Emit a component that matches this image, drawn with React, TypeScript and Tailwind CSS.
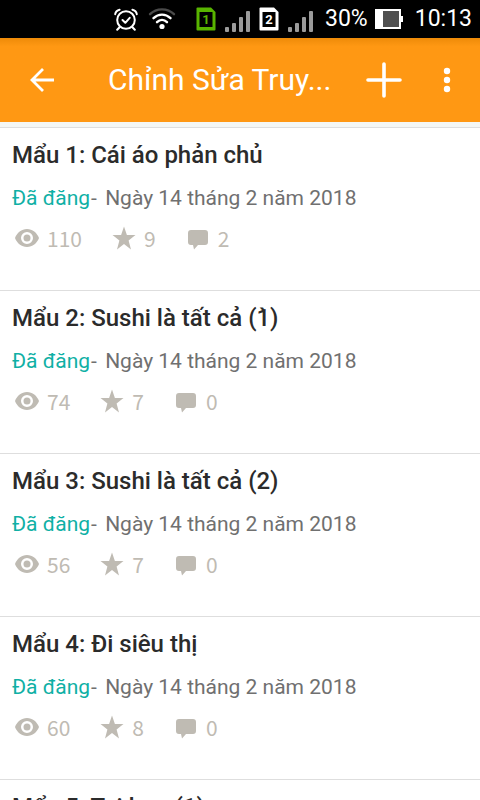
import React from 'react'

type Chapter = {
  title: string
  date: string
  views: number
  votes: number
  comments: number
}

const chapters: Chapter[] = [
  { title: 'Mẩu 1: Cái áo phản chủ', date: 'Ngày 14 tháng 2 năm 2018', views: 110, votes: 9, comments: 2 },
  { title: 'Mẩu 2: Sushi là tất cả (1\u0300)', date: 'Ngày 14 tháng 2 năm 2018', views: 74, votes: 7, comments: 0 },
  { title: 'Mẩu 3: Sushi là tất cả (2)', date: 'Ngày 14 tháng 2 năm 2018', views: 56, votes: 7, comments: 0 },
  { title: 'Mẩu 4: Đi siêu thị', date: 'Ngày 14 tháng 2 năm 2018', views: 60, votes: 8, comments: 0 },
  { title: 'Mẩu 5: Tai hoạ (1)', date: 'Ngày 14 tháng 2 năm 2018', views: 52, votes: 7, comments: 0 },
]

function AlarmIcon() {
  return (
    <svg className="h-6 w-6" viewBox="0 0 24 24" fill="none" stroke="white" strokeWidth="2" strokeLinecap="round" strokeLinejoin="round">
      <circle cx="12" cy="13" r="8.800" />
      <path d="M8.500 13l2.800 2.800 4.400-5" />
      <path d="M1.200 7.200c.4-2.300 2-4 4.400-4.500M22.800 7.200c-.4-2.300-2-4-4.400-4.500M5.800 20l-2.600 2.800M18.200 20l2.600 2.800" />
    </svg>
  )
}

function WifiIcon() {
  return (
    <svg className="h-6 w-7" viewBox="0 0 28 24" fill="none" strokeWidth="2.400" strokeLinecap="round">
      <path d="M2 7.200C8.500 0.700 19.500 0.700 26 7.200" stroke="#4a4a4a" />
      <path d="M5.500 11.200C10.500 6.400 17.500 6.400 22.500 11.200M9 15.200C12 12.200 16 12.200 19 15.200" stroke="white" />
      <circle cx="14" cy="19.500" r="2.600" fill="white" />
    </svg>
  )
}

function SimIcon({ slot, className }: { slot: number; className: string }) {
  return (
    <svg className={`h-6 w-5 ${className}`} viewBox="0 0 20 24" fill="currentColor">
      <path d="M1.500 0.500H15L19.500 5V22.500Q19.500 23.500 18.500 23.500H1.500Q0.500 23.500 0.500 22.500V1.500Q0.500 0.500 1.500 0.500Z" />
      <rect x="3.500" y="5" width="13" height="15" fill="black" />
      <text x="10" y="17" textAnchor="middle" fontFamily="Roboto, sans-serif" fontSize="13" fontWeight="700">
        {slot}
      </text>
    </svg>
  )
}

function SignalIcon() {
  return (
    <svg className="h-7 w-7" viewBox="0 0 28 28" fill="#9b9b9b">
      <rect x="1" y="22" width="4" height="5" rx="1" />
      <rect x="8" y="18" width="4" height="9" rx="1" />
      <rect x="15" y="12" width="4" height="15" rx="1" />
      <rect x="22" y="6" width="4" height="21" rx="1" />
    </svg>
  )
}

function BatteryIcon() {
  return (
    <svg className="h-5 w-7" viewBox="0 0 28 20">
      <path d="M0 0H26V7H28V13H26V20H0Z" fill="white" />
      <rect x="8" y="2" width="16" height="16" fill="#505050" />
    </svg>
  )
}

function StatusBar() {
  return (
    <div className="flex h-[38px] shrink-0 items-center justify-end bg-black pr-2 font-[Roboto,sans-serif] text-[23px] text-white">
      <AlarmIcon />
      <div className="ml-[10px]">
        <WifiIcon />
      </div>
      <div className="ml-5">
        <SimIcon slot={1} className="text-[#58b400]" />
      </div>
      <div className="ml-2">
        <SignalIcon />
      </div>
      <div className="ml-[7px]">
        <SimIcon slot={2} className="text-white" />
      </div>
      <div className="ml-2">
        <SignalIcon />
      </div>
      <span className="ml-[10px]">30%</span>
      <div className="ml-[7px]">
        <BatteryIcon />
      </div>
      <span className="ml-3">10:13</span>
    </div>
  )
}

function Toolbar() {
  return (
    <header className="flex h-[84px] shrink-0 items-center bg-[#ff9813] bg-linear-to-b from-[#ee8b08] to-[#ff9813] to-10% text-white">
      <button type="button" aria-label="Quay lại" className="ml-7">
        <svg className="h-7 w-7" viewBox="0 0 28 28" fill="none" stroke="currentColor" strokeWidth="2.800">
          <path d="M26 14H4.500M15 3L4 14l11 11" />
        </svg>
      </button>
      <h1 className="ml-[52px] min-w-0 flex-1 truncate text-3xl">Chỉnh Sửa Truy...</h1>
      <button type="button" aria-label="Thêm" className="ml-7">
        <svg className="h-9 w-9" viewBox="0 0 36 36" fill="none" stroke="currentColor" strokeWidth="3.600" strokeLinecap="round">
          <path d="M18 2v32M2 18h32" />
        </svg>
      </button>
      <button type="button" aria-label="Tùy chọn khác" className="mr-5 ml-[30px]">
        <svg className="h-7 w-7" viewBox="0 0 28 28" fill="currentColor">
          <circle cx="15" cy="5" r="3.200" />
          <circle cx="15" cy="14" r="3.200" />
          <circle cx="15" cy="23" r="3.200" />
        </svg>
      </button>
    </header>
  )
}

function EyeIcon() {
  return (
    <svg className="h-6 w-6" viewBox="0 0 24 24" fill="currentColor">
      <path fillRule="evenodd" d="M12 3C6.500 3 2 6.800 0 12c2 5.200 6.500 9 12 9s10-3.800 12-9c-2-5.200-6.500-9-12-9zm0 3a6 6 0 1 1 0 12a6 6 0 0 1 0-12z" />
      <circle cx="12" cy="12" r="3.500" />
    </svg>
  )
}

function StarIcon() {
  return (
    <svg className="h-6 w-6" viewBox="0 0 24 24" fill="currentColor">
      <path d="M12 0.500L14.900 9H23.500L16.600 14.400L19 23.500L12 18L5 23.500L7.400 14.400L0.500 9H9.100Z" />
    </svg>
  )
}

function CommentIcon() {
  return (
    <svg className="h-6 w-5" viewBox="0 0 20 24" fill="currentColor">
      <path d="M3 4H17Q20 4 20 7V16Q20 19 17 19H10L6 23.500L5 19H3Q0 19 0 16V7Q0 4 3 4Z" />
    </svg>
  )
}

function ChapterRow({ chapter }: { chapter: Chapter }) {
  return (
    <li className="h-[163px] border-t border-[#dedede] px-3 pt-[11px]">
      <h2 className="text-2xl leading-8 font-medium text-[#2b2b2b]">{chapter.title}</h2>
      <p className="mt-[13px] text-[21px] leading-7 text-[#707070]">
        <span className="mr-px text-[#0fb0a5]">Đã đăng</span>
        <span className="mr-[3px]">-</span> {chapter.date}
      </p>
      <div className="mt-3 flex h-7 items-center pl-[3px] font-['Noto_Sans_CJK_JP',sans-serif] text-[21px] leading-7 text-[#bfbbb3]">
        <EyeIcon />
        <span className="ml-2">{chapter.views}</span>
        <span className="ml-[30px]">
          <StarIcon />
        </span>
        <span className="ml-2">{chapter.votes}</span>
        <span className="ml-8">
          <CommentIcon />
        </span>
        <span className="ml-[10px]">{chapter.comments}</span>
      </div>
    </li>
  )
}

export default function App() {
  return (
    <div className="flex h-screen flex-col overflow-hidden bg-white font-[Roboto,sans-serif]">
      <StatusBar />
      <Toolbar />
      <main className="min-h-0 flex-1 overflow-hidden">
        <div className="h-[5px] bg-[#f4f7f5]" />
        <ul>
          {chapters.map((chapter) => (
            <ChapterRow key={chapter.title} chapter={chapter} />
          ))}
        </ul>
      </main>
    </div>
  )
}
